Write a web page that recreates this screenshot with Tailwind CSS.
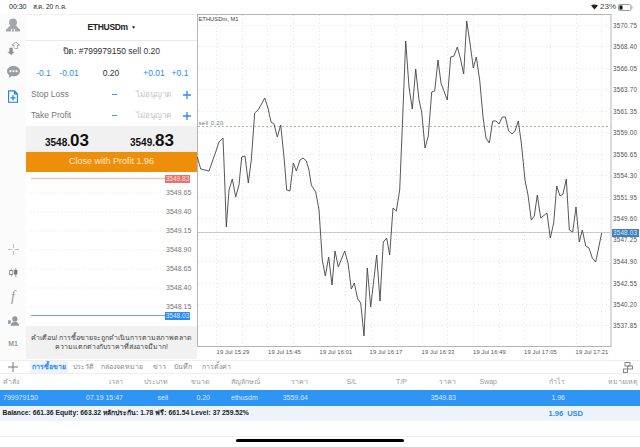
<!DOCTYPE html>
<html><head><meta charset="utf-8">
<script src="https://cdn.jsdelivr.net/npm/@tailwindcss/browser@4"></script>
</head>
<body class="m-0 bg-white">
<div class="w-[640px] h-[447px] overflow-hidden flex flex-col bg-white text-[#333] font-['Liberation_Sans','Noto_Sans',sans-serif]">
  <!-- status bar -->
  <div class="h-[14px] flex items-center justify-between pl-[9px] pr-[7px] text-[7px] text-[#222] shrink-0">
    <div class="flex gap-[6px] items-center"><span>00:30</span><span class="text-[6.500px]">ส.ค. 20 ก.ค.</span></div>
    <div class="flex items-center gap-[2px]">
      <svg width="7" height="6" viewBox="0 0 7 6"><path d="M0 1.500C2 0 5 0 7 1.500L3.500 5.500Z" fill="#222"/></svg>
      <span class="text-[8px] text-[#444]">23%</span>
      <svg width="15" height="7" viewBox="0 0 15 7"><rect x=".5" y=".5" width="12.500" height="6" rx="1.500" fill="none" stroke="#999"/><rect x="1.500" y="1.500" width="3" height="4" fill="#111"/><rect x="13.500" y="2.500" width="1" height="2" fill="#999"/></svg>
    </div>
  </div>
  <div class="h-[346px] flex shrink-0">
    <!-- rail -->
    <div class="w-[26px] shrink-0 flex flex-col items-center bg-[#fbfbfb]">
      <svg class="mt-[4px]" width="14" height="14" viewBox="0 0 16 16" fill="#a3a7ab"><circle cx="8" cy="5" r="4.500"/><path d="M4 9h8l3 3.500H1z"/><rect x="0" y="12.500" width="6" height="3" rx="1"/><rect x="10" y="12.500" width="6" height="3" rx="1"/><path d="M8 9l1.300 6.500H6.700z"/></svg>
      <svg class="mt-[10px]" width="13" height="13" viewBox="0 0 16 16"><path d="M3 7h4v5h2.500L5 16 .5 12H3z" fill="#8b9094"/><path d="M8.500 7V4H6l5-4 4.500 4H13v4H9.500" fill="#fff" stroke="#8b9094" stroke-width=".9"/></svg>
      <svg class="mt-[11px]" width="13" height="12" viewBox="0 0 15 14"><path d="M7.500 0C12 0 15 2.500 15 6s-3 6-7.500 6c-1 0-1.500 0-2.300-.2L2 14l.5-3.500C1 9.500 0 8 0 6 0 2.500 3 0 7.500 0z" fill="#989da0"/><circle cx="4" cy="6" r="1.200" fill="#fff"/><circle cx="7.500" cy="6" r="1.200" fill="#fff"/><circle cx="11" cy="6" r="1.200" fill="#fff"/></svg>
      <svg class="mt-[12px]" width="10" height="13" viewBox="0 0 12 15" fill="none" stroke="#1c83e8" stroke-width="1.300"><path d="M.7.700h7l3.600 3.600v10H.7zM7.700.7v3.600h3.600"/><path d="M6 6v6M3 9h6" stroke-width="1.500"/></svg>
      <svg class="mt-[141px]" width="11" height="11" viewBox="0 0 14 14" stroke="#b0b0b0" stroke-width="1"><path d="M7 0v5.500M7 8.500V14M0 7h5.500M8.500 7H14"/></svg>
      <svg class="mt-[12px]" width="9" height="11" viewBox="0 0 14 14"><path d="M3.500 1v12" stroke="#888"/><rect x="1" y="4" width="5" height="6" fill="#fff" stroke="#777" stroke-width="1.300"/><path d="M10.500 0v14" stroke="#666"/><rect x="8" y="3" width="5" height="7" fill="#777"/></svg>
      <span class="mt-[11px] font-['Liberation_Serif',serif] italic text-[14px] leading-[16px] text-[#999]">f</span>
      <svg class="mt-[11px]" width="11" height="10" viewBox="0 0 16 14" fill="#959a9e"><circle cx="10" cy="4" r="3.800"/><path d="M4 14c0-4 2.500-6 6-6s6 2 6 6z"/><rect x="0" y="6" width="4" height="5" rx=".5"/></svg>
      <span class="mt-[12px] text-[7px] leading-[12px] font-bold text-[#9a9a9a]">M1</span>
    </div>
    <!-- order panel -->
    <div class="w-[171px] shrink-0 flex flex-col bg-white border-t border-[#eee]">
      <div class="h-[26px] flex items-center justify-center gap-[3px] border-b border-[#e8e8e8] text-[#222] text-[8.500px] tracking-[-0.300px] font-bold"><span>ETHUSDm</span><span class="text-[5px]">▼</span></div>
      <div class="h-[21px] flex items-center justify-center text-[8.500px] text-[#333]">ปิด: #799979150 sell 0.20</div>
      <div class="h-[22px] flex items-center text-[8.500px] text-[#2d8cf0]">
        <span class="w-[21px] ml-[7px] text-center">-0.1</span><span class="w-[22px] ml-[4px] text-center">-0.01</span>
        <span class="w-[20px] ml-[21px] text-center text-[#333]">0.20</span>
        <span class="w-[24px] ml-[21px] text-center">+0.01</span><span class="w-[18px] ml-[5px] text-center">+0.1</span>
      </div>
      <div class="h-[21px] flex items-center pl-[5px] text-[8.500px] text-[#777]"><span class="w-[81px]">Stop Loss</span><span class="w-[5px] h-[1.500px] bg-[#3b95ee]"></span><span class="w-[55px] ml-[9px] text-center text-[8px] text-[#c4c4c4]">ไม่อนุญาต</span><svg class="ml-[2px]" width="8" height="8" viewBox="0 0 8 8" stroke="#2d8cf0" stroke-width="1.300"><path d="M4 0v8M0 4h8"/></svg></div>
      <div class="h-[21px] flex items-center pl-[5px] text-[8.500px] text-[#777]"><span class="w-[81px]">Take Profit</span><span class="w-[5px] h-[1.500px] bg-[#3b95ee]"></span><span class="w-[55px] ml-[9px] text-center text-[8px] text-[#c4c4c4]">ไม่อนุญาต</span><svg class="ml-[2px]" width="8" height="8" viewBox="0 0 8 8" stroke="#2d8cf0" stroke-width="1.300"><path d="M4 0v8M0 4h8"/></svg></div>
      <div class="h-[26px] bg-[#f1f1f2] flex items-end pb-[3px] text-[#111] font-bold text-[10px] leading-none">
        <span class="ml-[19px] w-[85px]">3548.<span class="text-[17px]">03</span></span>
        <span>3549.<span class="text-[17px]">83</span></span>
      </div>
      <div class="h-[20px] bg-[#ee8f0b] flex items-center justify-center text-[9px] text-[#fbe9cc]">Close with Profit 1.96</div>
      <!-- mini price scale -->
      <div class="relative h-[153.500px]">
        <svg class="absolute inset-0" width="171" height="154" fill="none">
          <path d="M5 6.500H139" stroke="#e4c9c5" stroke-width="1.500"/>
          <path d="M5 143.500H139" stroke="#7d9fbd"/>
          <g stroke="#e6e6e6" stroke-dasharray="1 2"><path d="M5 21H139M5 40H139M5 59H139M5 78H139M5 97H139M5 116H139M5 135H139"/></g>
        </svg>
        <div class="absolute left-[139px] top-[3px] w-[25px] h-[8px] bg-[#e8736c] text-[#fbdedb] text-[6.500px] leading-[8px] text-center">3549.83</div>
        <div class="absolute left-[140px] top-[16px] text-[7px] leading-[10px] text-[#777] flex flex-col gap-[9px]">
          <span>3549.65</span><span>3549.40</span><span>3549.15</span><span>3548.90</span><span>3548.65</span><span>3548.40</span><span>3548.15</span>
        </div>
        <div class="absolute left-[139px] top-[140px] w-[25px] h-[8px] bg-[#2d8cf0] text-[#d8ebff] text-[6.500px] leading-[8px] text-center">3548.03</div>
      </div>
      <div class="h-[33px] bg-[#f1f1f1] flex flex-col items-center justify-center text-[7px] leading-[9.500px] text-[#444] whitespace-nowrap">
        <span>คำเตือน! การซื้อขายจะถูกดำเนินการตามสภาพตลาด</span>
        <span>ความแตกต่างกับราคาที่ส่งอาจมีมาก!</span>
      </div>
    </div>
    <!-- chart -->
    <div class="w-[443px] shrink-0">
      <svg width="443" height="346" viewBox="198 14 443 346" font-family="Liberation Sans, sans-serif" fill="none">
        <rect x="198.500" y="14.500" width="413.500" height="332" stroke="#b5b5b5" fill="#fff"/>
        <g stroke="#e3e3e3" stroke-dasharray="1 3">
          <path d="M217.500 15V346M243.500 15V346M268.500 15V346M294.500 15V346M320.500 15V346M346.500 15V346M372.500 15V346M397.500 15V346M423.500 15V346M448.500 15V346M474.500 15V346M500.500 15V346M525.500 15V346M551.500 15V346M577.500 15V346M602.500 15V346"/>
          <path d="M199 25.500H612M199 46.500H612M199 68.500H612M199 89.500H612M199 111.500H612M199 132.500H612M199 154.500H612M199 175.500H612M199 197.500H612M199 218.500H612M199 239.500H612M199 261.500H612M199 283.500H612M199 304.500H612M199 325.500H612"/>
        </g>
        <path d="M199 126.500H612" stroke="#a9c4a2" stroke-dasharray="2 2"/>
        <path d="M199 232.500H612" stroke="#c5c9d6"/>
        <polyline stroke="#444" stroke-width=".9" stroke-linejoin="round" points="198.300,157 201.700,169 210,171 216.700,152 220,142 224,138 225.700,180 227.300,227 230,190 233.300,179 236.700,197 240,185 242.700,157 246,156 249.300,183 252.300,160 255.700,113 259,110 262,105 265.700,98 269,108 272,122 275,124 278.300,137 281.700,125 285,157 287.700,190 291,191 294.300,163 297.300,171 301,160 304,158 307.300,161 310,170 312.300,185 316.700,192 320,210 323.300,260 326.300,276 329.700,257 333,285 336,251 339.300,267 345.700,251 349,263 352.300,289 355.300,283 358.700,299 361.700,303 365,336 368.300,268 371.700,307 377.700,255 381,301 384.300,242 387.700,238 390.700,255 394,208 397.300,211 400.700,190 403.300,127 406.700,41 410,87 413.300,109 416.700,69 420,100 422.700,112 426,148 429.300,136 432.700,92 435.700,91 439,60 442,83 448.300,100 451.700,57 455,56 458.300,47 461.300,58 464.700,74 467.700,21 471,43 474.300,68 477.300,57 480.700,80 484,117 487,138 490.300,143 493.700,121 497,121 500,124 503.300,117 506.300,117 509.700,131 513,134 516,131 519.300,121 522.300,143 526,180 529,195 532.300,220 535.300,216 538.300,195 541.700,218 548,213 551.300,238 554.700,223 557.700,186 561,196 564,194 567.300,179 570.300,230 573.700,232 577,207 580.300,242 583.300,230 586.700,246 590,248 593.300,258 596.700,262 602.700,233"/>
        <g fill="#444" font-size="5.800"><text x="199.500" y="21">ETHUSDm, M1</text></g>
        <text x="199.500" y="125" fill="#777" font-size="6" letter-spacing=".3">sell 0.20</text>
        <g fill="#555" font-size="6.300" letter-spacing=".2">
          <text x="614" y="27.500">3570.75</text><text x="614" y="49">3568.40</text><text x="614" y="70.500">3566.05</text><text x="614" y="92">3563.70</text><text x="614" y="113.500">3561.35</text><text x="614" y="135">3559.00</text><text x="614" y="156.500">3556.65</text><text x="614" y="178">3554.30</text><text x="614" y="199.500">3551.95</text><text x="614" y="220.500">3549.60</text><text x="614" y="242">3547.25</text><text x="614" y="263.500">3544.90</text><text x="614" y="285.500">3542.55</text><text x="614" y="306.500">3540.20</text><text x="614" y="328">3537.85</text>
        </g>
        <rect x="613" y="229" width="27" height="8" fill="#4080bd"/>
        <text x="614" y="235.300" fill="#d7e6f5" font-size="6.300" letter-spacing=".2">3548.03</text>
        <g fill="#555" font-size="5.800" letter-spacing=".1" text-anchor="middle">
          <text x="234" y="353.500">19 Jul 15:29</text><text x="285.500" y="353.500">19 Jul 15:45</text><text x="337" y="353.500">19 Jul 16:01</text><text x="387" y="353.500">19 Jul 16:17</text><text x="439" y="353.500">19 Jul 16:33</text><text x="490.500" y="353.500">19 Jul 16:49</text><text x="541.500" y="353.500">19 Jul 17:05</text><text x="593" y="353.500">19 Jul 17:21</text>
        </g>
      </svg>
    </div>
  </div>
  <!-- tabs -->
  <div class="h-[14px] shrink-0 flex items-center border-y border-[#eee] relative text-[7px] text-[#888]">
    <svg class="ml-[8px]" width="10" height="10" viewBox="0 0 10 10" stroke="#777"><path d="M5 0v10M0 5h10"/></svg>
    <span class="ml-[12px] w-[38px] h-[12px] leading-[12px] text-center bg-[#eef4fb] text-[#2d8cf0] font-bold">การซื้อขาย</span>
    <span class="ml-[5px]">ประวัติ</span><span class="ml-[7px]">กล่องจดหมาย</span><span class="ml-[10px]">ข่าว</span><span class="ml-[8px]">บันทึก</span><span class="ml-[10px]">การตั้งค่า</span>
    <svg class="absolute right-[7px] top-[1px]" width="10" height="11" viewBox="0 0 10 11" fill="none" stroke="#888"><rect x="2" y=".5" width="5" height="3.500"/><rect x="4.500" y="4" width="5" height="3"/><rect x=".5" y="7" width="4" height="3.500"/></svg>
  </div>
  <!-- header -->
  <div class="h-[16px] shrink-0 grid grid-cols-[60px_63px_45px_42px_50px_48px_49px_50px_49px_41px_68px_1fr] items-center text-[7px] text-[#999] text-right">
    <span class="text-left pl-[3px]">คำสั่ง</span><span>เวลา</span><span>ประเภท</span><span>ขนาด</span><span class="text-left pl-[21px]">สัญลักษณ์</span><span>ราคา</span><span>S/L</span><span>T/P</span><span>ราคา</span><span>Swap</span><span>กำไร</span><span class="pr-[2px]">หมายเหตุ</span>
  </div>
  <div class="h-[16px] shrink-0 grid grid-cols-[60px_63px_45px_42px_50px_48px_49px_50px_49px_41px_68px_1fr] items-center text-[7px] text-[#d5e9fd] bg-[#2f95f5] text-right">
    <span class="text-left pl-[3px]">799979150</span><span>07.19 15:47</span><span>sell</span><span>0.20</span><span class="text-left pl-[21px]">ethusdm</span><span>3559.64</span><span></span><span></span><span>3549.83</span><span></span><span>1.96</span><span></span>
  </div>
  <div class="h-[15px] shrink-0 flex items-center justify-between bg-[#eef3fa] text-[6.800px] font-bold text-[#222] pl-[2.500px]">
    <span>Balance: 661.36 Equity: 663.32 หลักประกัน: 1.78 ฟรี: 661.54 Level: 37 259.52%</span>
    <span class="text-[#2d8cf0] text-[7.500px] mr-[57px]"><span class="mr-[4px]">1.96</span>USD</span>
  </div>
  <div class="h-[16px] shrink-0 border-b border-[#eee]"></div>
  <div class="flex-1 flex justify-center pt-[2px]"><div class="w-[168px] h-[3px] bg-black rounded-full"></div></div>
</div>
</body></html>
